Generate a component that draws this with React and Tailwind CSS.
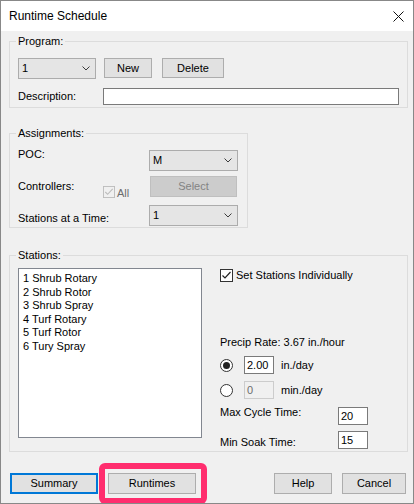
import React from "react";

// Win10-style "Runtime Schedule" dialog

function Chevron() {
  return (
    <svg width="8" height="5" viewBox="0 0 8 5" className="shrink-0" aria-hidden>
      <polyline points="0.5,0.5 4,4 7.5,0.5" fill="none" stroke="#3c3c3c" strokeWidth="1" />
    </svg>
  );
}

function Combo({ value, className = "" }) {
  return (
    <div
      className={`h-[21px] bg-[#e5e5e5] border border-[#acacac] flex items-center justify-between pl-[3px] pr-[5px] ${className}`}
    >
      <span>{value}</span>
      <Chevron />
    </div>
  );
}

function Btn({ children, className = "", disabled }) {
  return (
    <div
      className={`flex items-center justify-center border ${
        disabled
          ? "bg-[#cccccc] border-[#bfbfbf] text-[#838383]"
          : "bg-[#e1e1e1] border-[#adadad] text-black"
      } ${className}`}
    >
      {children}
    </div>
  );
}

function TextBox({ value, className = "", disabled }) {
  return (
    <div
      className={`h-[18px] w-[30px] border flex items-center pl-[2px] ${
        disabled ? "bg-[#f0f0f0] border-[#cccccc] text-[#6d6d6d]" : "bg-white border-[#7a7a7a]"
      } ${className}`}
    >
      {value}
    </div>
  );
}

function CheckBox({ checked, disabled, size = 13 }) {
  const stroke = disabled ? "#bcbcbc" : "#222";
  return (
    <svg width={size} height={size} viewBox="0 0 13 13" className="shrink-0" aria-hidden>
      <rect
        x="0.5"
        y="0.5"
        width="12"
        height="12"
        fill={disabled ? "#f0f0f0" : "#fff"}
        stroke={disabled ? "#bcbcbc" : "#333"}
      />
      {checked && (
        <polyline points="2.5,6.5 5,9 10.5,3" fill="none" stroke={stroke} strokeWidth="1.2" />
      )}
    </svg>
  );
}

function Radio({ checked }) {
  return (
    <svg width="13" height="13" viewBox="0 0 13 13" className="shrink-0" aria-hidden>
      <circle cx="6.5" cy="6.5" r="6" fill="#fff" stroke="#333" />
      {checked && <circle cx="6.5" cy="6.5" r="3.5" fill="#222" />}
    </svg>
  );
}

function GroupBox({ label, className = "", children }) {
  return (
    <div className={`relative border border-[#dcdcdc] ${className}`}>
      <span className="absolute left-[6px] top-[-8px] px-[2px] bg-[#f0f0f0] leading-[14px]">
        {label}
      </span>
      {children}
    </div>
  );
}

const stations = [
  "1 Shrub Rotary",
  "2 Shrub Rotor",
  "3 Shrub Spray",
  "4 Turf Rotary",
  "5 Turf Rotor",
  "6 Tury Spray",
];

export default function App() {
  return (
    <div className="relative w-[414px] h-[504px] border border-[#888888] bg-[#f0f0f0] flex flex-col font-['Liberation_Sans',Arial,sans-serif] text-[11px] text-black overflow-hidden">
      {/* title bar */}
      <div className="h-[30px] shrink-0 bg-white flex items-center justify-between pl-[8px] pr-[9px]">
        <span className="text-[12px]">Runtime Schedule</span>
        <svg width="11" height="11" viewBox="0 0 11 11" aria-hidden>
          <path d="M0.5 0.5 L10.5 10.5 M10.5 0.5 L0.5 10.5" stroke="#111" strokeWidth="1" />
        </svg>
      </div>

      <div className="flex-1 flex flex-col pl-[8px] pr-[7px]">
        {/* Program */}
        <GroupBox label="Program:" className="mt-[10px] w-[399px] h-[67px] pl-[8px] pt-[16px]">
          <div className="flex">
            <Combo value="1" className="w-[78px]" />
            <Btn className="ml-[8px] w-[48px] h-[20px]">New</Btn>
            <Btn className="ml-[10px] w-[62px] h-[20px]">Delete</Btn>
          </div>
          <div className="mt-[9px] flex items-center">
            <span className="w-[85px]">Description:</span>
            <div className="w-[296px] h-[17px] bg-white border border-[#7a7a7a]" />
          </div>
        </GroupBox>

        {/* Assignments */}
        <GroupBox label="Assignments:" className="mt-[25px] w-[239px] h-[95px] pl-[8px] pt-[16px]">
          <div className="flex h-[21px] items-start">
            <span className="w-[131px] leading-[14px] mt-[-3px]">POC:</span>
            <Combo value="M" className="w-[89px]" />
          </div>
          <div className="mt-[5px] flex h-[21px] items-start">
            <span className="w-[85px] leading-[14px] mt-[3px]">Controllers:</span>
            <div className="w-[47px] mt-[9px] flex items-center">
              <CheckBox checked disabled size={12} />
              <span className="ml-[2px] mt-[2px] text-[#6d6d6d] leading-[12px]">All</span>
            </div>
            <Btn disabled className="w-[87px] h-[21px]">
              Select
            </Btn>
          </div>
          <div className="mt-[8px] flex h-[21px] items-start">
            <span className="w-[131px] leading-[14px] mt-[6px]">Stations at a Time:</span>
            <Combo value="1" className="w-[89px]" />
          </div>
        </GroupBox>

        {/* Stations */}
        <GroupBox label="Stations:" className="mt-[27px] w-[399px] h-[197px] pl-[8px] pt-[12px] flex items-start">
          <div className="w-[184px] h-[170px] shrink-0 bg-white border border-[#828790] pt-[3px] pl-[4px] leading-[13.6px]">
            {stations.map((s) => (
              <div key={s}>{s}</div>
            ))}
          </div>

          <div className="ml-[18px] flex flex-col">
            <div className="mt-[1px] h-[13px] flex items-center">
              <CheckBox checked />
              <span className="ml-[3px]">Set Stations Individually</span>
            </div>

            <div className="mt-[53px] leading-[14px]">Precip Rate: 3.67 in./hour</div>

            <div className="mt-[7px] h-[18px] flex items-center">
              <Radio checked />
              <TextBox value="2.00" className="ml-[11px]" />
              <span className="ml-[7px]">in./day</span>
            </div>

            <div className="mt-[7px] h-[18px] flex items-center">
              <Radio />
              <TextBox value="0" disabled className="ml-[11px]" />
              <span className="ml-[7px]">min./day</span>
            </div>

            <div className="mt-[8px] h-[18px] flex items-start">
              <span className="w-[118px] leading-[14px] mt-[-2px]">Max Cycle Time:</span>
              <TextBox value="20" />
            </div>

            <div className="mt-[6px] h-[18px] flex items-start">
              <span className="w-[118px] leading-[14px] mt-[4px]">Min Soak Time:</span>
              <TextBox value="15" />
            </div>
          </div>
        </GroupBox>

        {/* dialog buttons */}
        <div className="mt-[21px] h-[21px] flex">
          <div className="ml-[1px] w-[88px] h-[21px] border-2 border-[#0078d7] bg-[#e1e1e1] flex items-center justify-center">
            Summary
          </div>
          <Btn className="ml-[10px] w-[88px] h-[21px]">Runtimes</Btn>
          <Btn className="ml-auto w-[58px] h-[21px]">Help</Btn>
          <Btn className="ml-[10px] w-[64px] h-[21px]">Cancel</Btn>
        </div>
      </div>

      {/* highlight annotation around Runtimes */}
      <div className="absolute left-[98px] top-[462px] w-[108px] h-[41px] border-[6px] border-[#ff2d6e] rounded-[6px] pointer-events-none" />
    </div>
  );
}
